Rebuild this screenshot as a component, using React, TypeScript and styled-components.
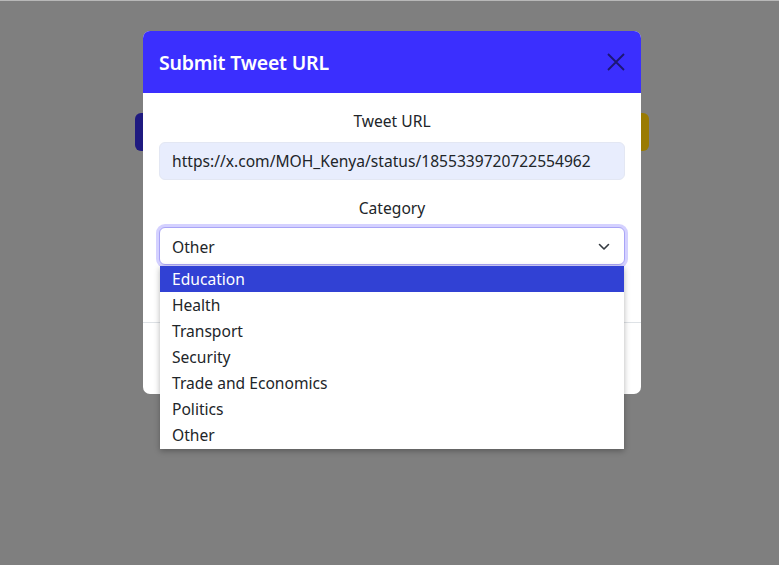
import React from "react";
import styled, { createGlobalStyle } from "styled-components";

const Global = createGlobalStyle`
  html, body { margin: 0; padding: 0; }
  body {
    background: #7f7f7f;
    font-family: "Noto Sans", "Open Sans", sans-serif;
    color: #212529;
  }
  * { box-sizing: border-box; }
`;

const Page = styled.div`
  position: relative;
  width: 779px;
  height: 565px;
  overflow: hidden;
  background: #7f7f7f;
  border-top: 1px solid #b8b8b8;
`;

const Backdrop = styled.div`
  position: absolute;
  inset: 0;
  display: flex;
  justify-content: center;
  padding-left: 5px;
  padding-top: 30px;
`;

const BgButton = styled.div<{ $color: string; $side: "left" | "right" }>`
  position: absolute;
  top: 112px;
  ${(p) => (p.$side === "left" ? "left: 135px;" : "left: 600px;")}
  width: 49px;
  height: 38px;
  border-radius: 6px;
  background: ${(p) => p.$color};
`;

const Modal = styled.div`
  position: relative;
  width: 498px;
  height: 363px;
  background: #fff;
  border-radius: 7px;
  display: flex;
  flex-direction: column;
  overflow: visible;
`;

const Header = styled.div`
  height: 62px;
  background: #3b2ffe;
  border-radius: 7px 7px 0 0;
  display: flex;
  align-items: center;
  justify-content: space-between;
  padding: 0 14px 0 16px;
`;

const Title = styled.h5`
  margin: 0;
  font-size: 19.5px;
  font-weight: 600;
  color: #fff;
  letter-spacing: -0.2px;
`;

const CloseBtn = styled.button`
  border: none;
  background: transparent;
  padding: 0;
  width: 22px;
  height: 22px;
  display: flex;
  align-items: center;
  justify-content: center;
`;

const Body = styled.div`
  padding: 16px 16px 0 16px;
  height: 230px;
  border-bottom: 1px solid #dee2e6;
  display: flex;
  flex-direction: column;
`;

const Label = styled.div<{ $mt?: number }>`
  text-align: center;
  font-size: 15.6px;
  line-height: 24px;
  margin-top: ${(p) => p.$mt ?? 0}px;
  color: #212529;
`;

const UrlInput = styled.div`
  margin-top: 9px;
  height: 38px;
  background: #e8edfd;
  border: 1px solid #e3e7f3;
  border-radius: 6px;
  display: flex;
  align-items: center;
  padding-left: 12px;
  font-size: 15.6px;
  color: #212529;
  white-space: nowrap;
`;

const SelectWrap = styled.div`
  position: relative;
  margin-top: 7px;
`;

const Select = styled.div`
  height: 38px;
  border: 1px solid #a9a4f6;
  box-shadow: 0 0 0 3px rgba(59, 47, 254, 0.22);
  border-radius: 6px;
  display: flex;
  align-items: center;
  justify-content: space-between;
  padding: 1px 14px 0 12px;
  font-size: 15.6px;
  background: #fff;
`;

const Dropdown = styled.ul`
  position: absolute;
  top: 39px;
  left: 1px;
  width: 464px;
  margin: 0;
  padding: 0 0 1px 0;
  list-style: none;
  background: #fff;
  box-shadow: 0 2px 6px rgba(0, 0, 0, 0.3);
  z-index: 5;
`;

const Option = styled.li<{ $active?: boolean }>`
  height: 26px;
  line-height: 27px;
  padding-left: 12px;
  font-size: 15.6px;
  background: ${(p) => (p.$active ? "#3141d4" : "transparent")};
  color: ${(p) => (p.$active ? "#fff" : "#212529")};
`;

const options = [
  "Education",
  "Health",
  "Transport",
  "Security",
  "Trade and Economics",
  "Politics",
  "Other",
];

export default function App() {
  return (
    <Page>
      <Global />
      <BgButton $color="#1f1a80" $side="left" />
      <BgButton $color="#9a7b02" $side="right" />
      <Backdrop>
        <Modal>
          <Header>
            <Title>Submit Tweet URL</Title>
            <CloseBtn aria-label="Close">
              <svg width="18" height="18" viewBox="0 0 18 18">
                <path
                  d="M1 1L17 17M17 1L1 17"
                  stroke="#1c1773"
                  strokeWidth="1.8"
                  fill="none"
                />
              </svg>
            </CloseBtn>
          </Header>
          <Body>
            <Label>Tweet URL</Label>
            <UrlInput>https://x.com/MOH_Kenya/status/1855339720722554962</UrlInput>
            <Label $mt={16}>Category</Label>
            <SelectWrap>
              <Select>
                <span>Other</span>
                <svg width="12" height="8" viewBox="0 0 12 8">
                  <path
                    d="M1.5 1.5L6 6L10.5 1.5"
                    stroke="#343a40"
                    strokeWidth="1.6"
                    fill="none"
                    strokeLinecap="round"
                    strokeLinejoin="round"
                  />
                </svg>
              </Select>
              <Dropdown>
                {options.map((o, i) => (
                  <Option key={o} $active={i === 0}>
                    {o}
                  </Option>
                ))}
              </Dropdown>
            </SelectWrap>
          </Body>
        </Modal>
      </Backdrop>
    </Page>
  );
}
